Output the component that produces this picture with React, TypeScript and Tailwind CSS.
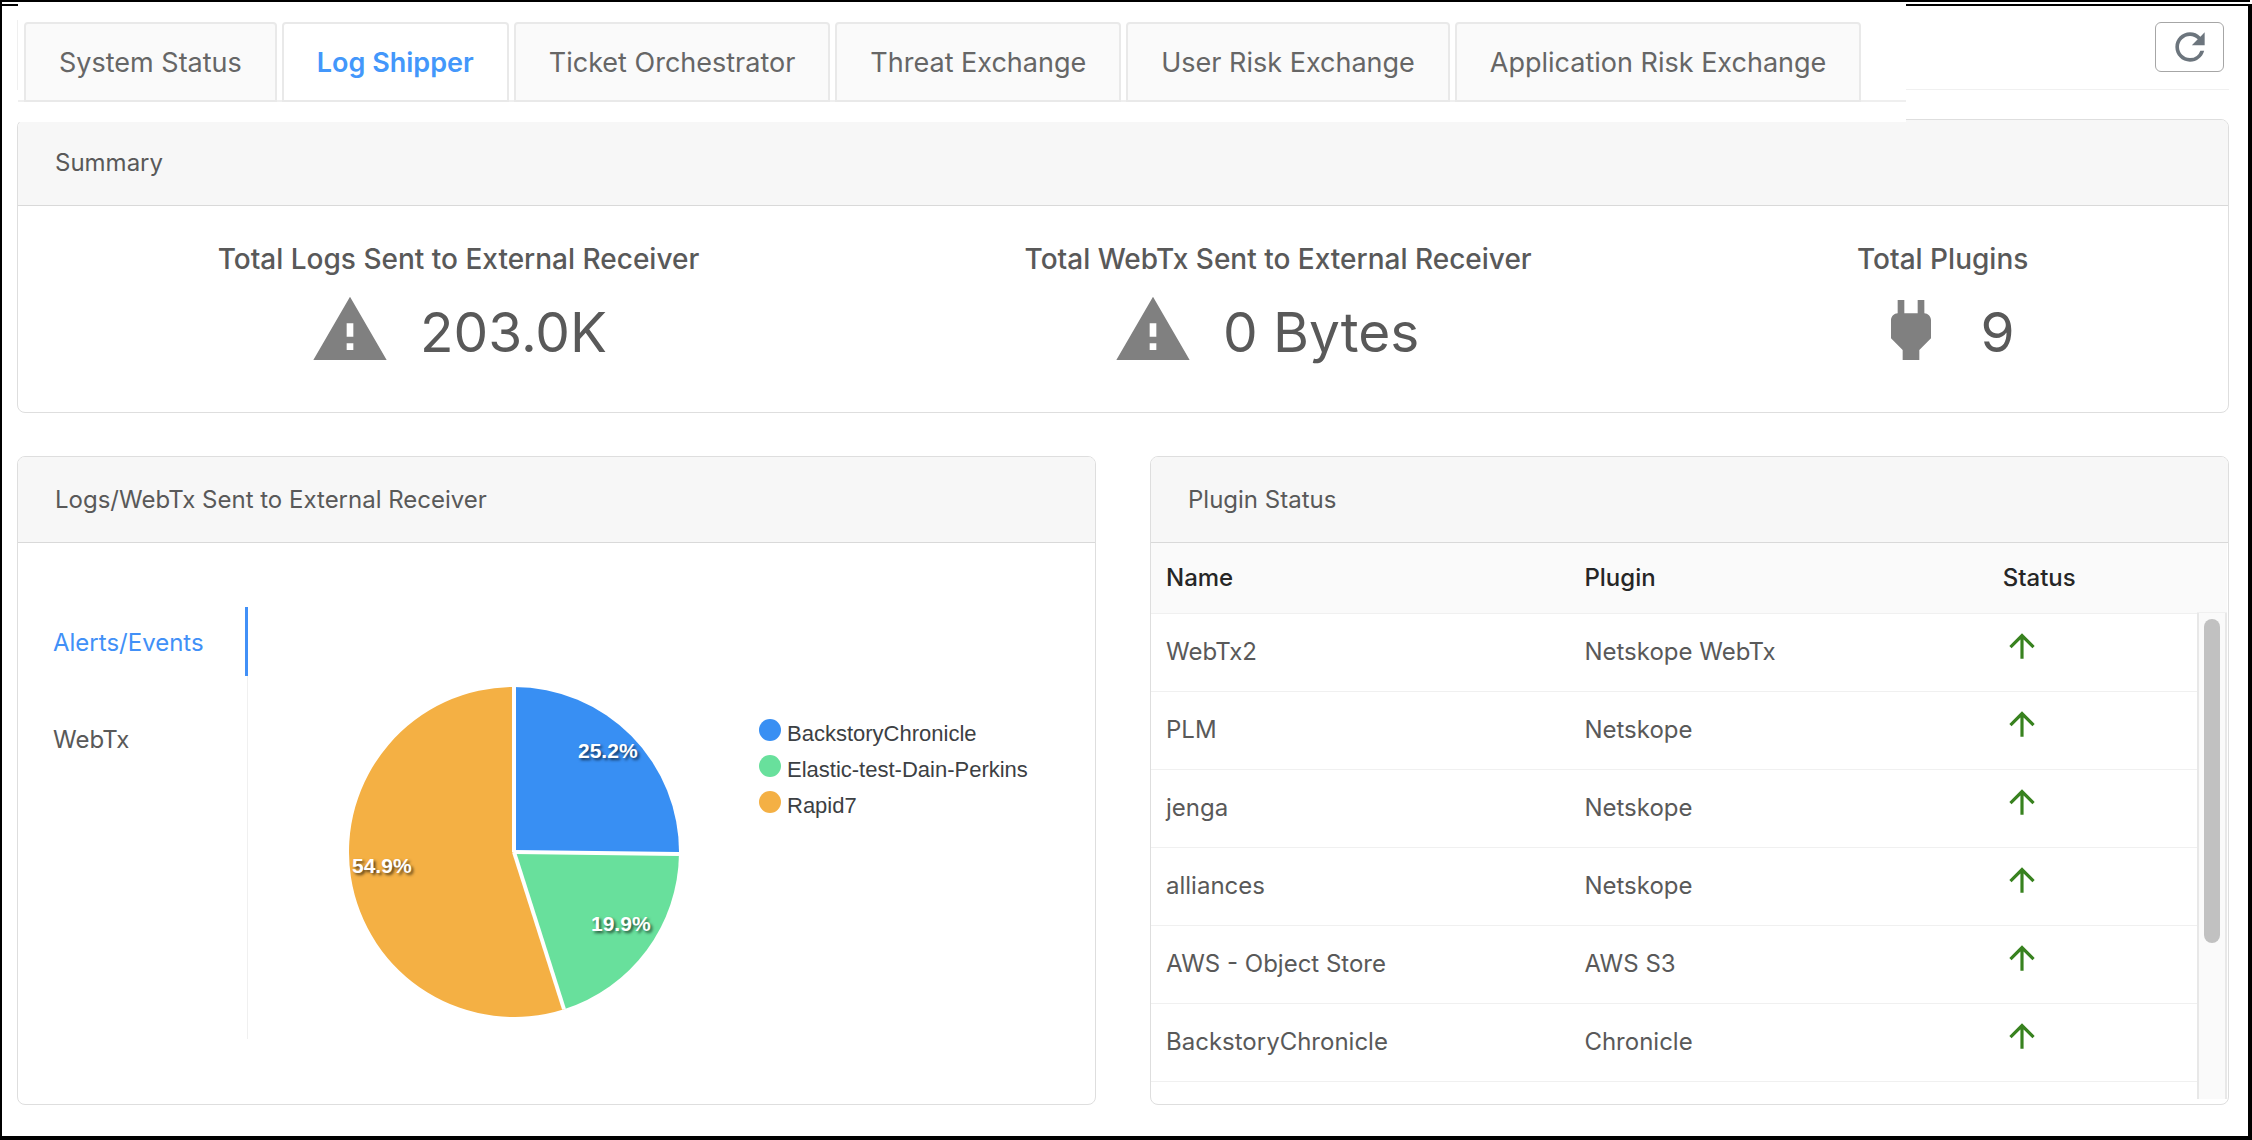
import { useState, type ReactNode } from "react";

const tabs = [
  "System Status",
  "Log Shipper",
  "Ticket Orchestrator",
  "Threat Exchange",
  "User Risk Exchange",
  "Application Risk Exchange",
];

const plugins = [
  { name: "WebTx2", plugin: "Netskope WebTx" },
  { name: "PLM", plugin: "Netskope" },
  { name: "jenga", plugin: "Netskope" },
  { name: "alliances", plugin: "Netskope" },
  { name: "AWS - Object Store", plugin: "AWS S3" },
  { name: "BackstoryChronicle", plugin: "Chronicle" },
];

const slices = [
  { name: "BackstoryChronicle", value: 25.2, fill: "#388ff3", x: 229, y: 71 },
  { name: "Elastic-test-Dain-Perkins", value: 19.9, fill: "#68e09c", x: 242, y: 244 },
  { name: "Rapid7", value: 54.9, fill: "#f4b044", x: 3, y: 186 },
];

const WARNING = "M1 21h22L12 2 1 21zm12-3h-2v-2h2v2zm0-4h-2v-4h2v4z";
const POWER =
  "M16.01 7L16 3h-2v4h-4V3H8v4h-.01C7 6.99 6 7.99 6 8.99v5.49L9.5 18v3h5v-3l3.5-3.51v-5.5c0-1-1-2-1.99-1.99z";
const REFRESH =
  "M17.65 6.35A7.958 7.958 0 0 0 12 4c-4.42 0-7.99 3.58-7.99 8s3.57 8 7.99 8c3.73 0 6.84-2.55 7.73-6h-2.08A5.99 5.99 0 0 1 12 18c-3.31 0-6-2.69-6-6s2.69-6 6-6c1.66 0 3.14.69 4.22 1.78L13 11h7V4l-2.35 2.35z";
const ARROW_UP = "M4 12l1.41 1.41L11 7.83V20h2V7.83l5.58 5.59L20 12l-8-8-8 8z";

function Icon({ path, className }: { path: string; className: string }) {
  return (
    <svg viewBox="0 0 24 24" fill="currentColor" aria-hidden="true" className={className}>
      <path d={path} />
    </svg>
  );
}

function Card({ title, children }: { title: string; children: ReactNode }) {
  return (
    <section className="overflow-hidden rounded-lg border border-[#dedede] bg-white">
      <h2 className="flex h-[86px] items-center border-b border-[#d9d9d9] bg-[#f7f7f7] px-[37px] text-2xl text-[#595959]">
        {title}
      </h2>
      {children}
    </section>
  );
}

function Stat({
  title,
  icon,
  value,
  className = "",
}: {
  title: string;
  icon: string;
  value: string;
  className?: string;
}) {
  return (
    <div className="flex flex-col items-center">
      <h3 className="mb-[11px] text-[28px] leading-10 font-medium">{title}</h3>
      <div className={"flex items-start gap-[30px] " + className}>
        <Icon path={icon} className="size-20 text-[#808080]" />
        <span className="text-[55px] leading-[84px]">{value}</span>
      </div>
    </div>
  );
}

function Pie() {
  const c = 165;
  let start = 0;
  const point = (pct: number) => {
    const a = (pct / 100) * 2 * Math.PI;
    return `${c + c * Math.sin(a)} ${c - c * Math.cos(a)}`;
  };
  const wedges = slices.map((s) => {
    const from = start;
    start += s.value;
    return `M${c} ${c}L${point(from)}A${c} ${c} 0 ${s.value > 50 ? 1 : 0} 1 ${point(start)}Z`;
  });
  const cuts = [0, slices[0].value, slices[0].value + slices[1].value];
  return (
    <svg
      viewBox="0 0 330 330"
      className="mt-20 ml-[101px] size-[330px] shrink-0"
      role="img"
      aria-label="Share of logs by receiver"
    >
      {wedges.map((d, i) => (
        <path key={i} d={d} fill={slices[i].fill} />
      ))}
      {cuts.map((p) => (
        <path key={p} d={`M${c} ${c}L${point(p)}`} stroke="#fff" strokeWidth="4" />
      ))}
      {slices.map((s) => (
        <text
          key={s.name}
          x={s.x}
          y={s.y}
          className="fill-white font-['Liberation_Sans',sans-serif] text-[21px] font-bold [text-shadow:2px_2px_3px_rgba(0,0,0,0.65)]"
        >
          {s.value}%
        </text>
      ))}
    </svg>
  );
}

export default function App() {
  const [tab, setTab] = useState("Log Shipper");
  const [source, setSource] = useState("Alerts/Events");

  return (
    <div className="flex min-h-screen flex-col bg-white font-['Inter',sans-serif] text-[#595959]">
      <div className="mr-0.5 h-0.5 bg-black" />
      <div className="h-0.5 border-l-2 border-black" />
      <main className="flex-1 border-r-4 border-b-4 border-l-2 border-black">
        <div className="flex h-0.5 justify-between">
          <div className="w-4 bg-black" />
          <div className="w-[342px] bg-black" />
        </div>

        <div className="pr-[19px] pb-[31px] pl-[15px]">
          <header className="flex h-[113px] items-start">
            <div className="mt-[14px] h-[70px] w-px bg-[#efefef]" />
            <nav className="relative z-10 h-[116px] flex-1 bg-white pt-4">
              <div role="tablist" className="flex h-20 gap-[5px] border-b-2 border-[#efefef] pl-1.5">
                {tabs.map((t) => (
                  <button
                    key={t}
                    type="button"
                    role="tab"
                    aria-selected={t === tab}
                    onClick={() => setTab(t)}
                    className={
                      "h-20 shrink-0 rounded-t border-2 border-[#e9e9e9] px-[33px] pt-0.5 text-[27px] whitespace-nowrap " +
                      (t === tab ? "bg-white font-semibold text-[#4397fb]" : "bg-[#fafafa] text-[#666666]")
                    }
                  >
                    {t}
                  </button>
                ))}
              </div>
            </nav>
            <div className="flex h-[84px] w-[323px] items-start justify-end border-b border-[#f0f0f0] pt-4 pr-[5px]">
              <button
                type="button"
                aria-label="Refresh"
                className="flex h-[50px] w-[69px] items-center justify-center rounded-md border border-[#a6a6a6] text-[#6c757d]"
              >
                <Icon path={REFRESH} className="size-11" />
              </button>
            </div>
          </header>

          <Card title="Summary">
            <div className="flex justify-around px-[37px] pt-[33px] pb-[38px]">
              <Stat title="Total Logs Sent to External Receiver" icon={WARNING} value="203.0K" />
              <Stat title="Total WebTx Sent to External Receiver" icon={WARNING} value="0 Bytes" className="pr-6" />
              <Stat title="Total Plugins" icon={POWER} value="9" />
            </div>
          </Card>

          <div className="mt-[43px] grid grid-cols-2 gap-[54px]">
            <Card title="Logs/WebTx Sent to External Receiver">
              <div className="flex px-[35px] pt-16 pb-[65px]">
                <div
                  role="tablist"
                  aria-orientation="vertical"
                  className="flex h-[432px] w-[195px] shrink-0 flex-col gap-7 border-r border-[#f0f0f0]"
                >
                  {["Alerts/Events", "WebTx"].map((s) => (
                    <button
                      key={s}
                      type="button"
                      role="tab"
                      aria-selected={s === source}
                      onClick={() => setSource(s)}
                      className={
                        "-mr-px h-[69px] border-r-3 pt-0.5 text-left text-2xl " +
                        (s === source ? "border-[#4190f7] text-[#4190f7]" : "border-transparent")
                      }
                    >
                      {s}
                    </button>
                  ))}
                </div>
                <Pie />
                <ul className="mt-28 ml-20 font-['Liberation_Sans',sans-serif] text-[22px] leading-[29px] text-[#3c4043]">
                  {slices.map((s) => (
                    <li key={s.name} className="flex h-9 items-start gap-1.5 whitespace-nowrap">
                      <span className="size-[22px] shrink-0 rounded-full" style={{ backgroundColor: s.fill }} />
                      {s.name}
                    </li>
                  ))}
                </ul>
              </div>
            </Card>

            <Card title="Plugin Status">
              <div className="flex h-[556px]">
                <table className="h-fit flex-1 table-fixed text-left text-2xl">
                  <thead>
                    <tr className="h-[70px] border-b border-[#f0f0f0] bg-[#fafafa] text-[#262626]">
                      <th scope="col" className="w-2/5 pl-[15px] font-medium">Name</th>
                      <th scope="col" className="w-2/5 pl-[15px] font-medium">Plugin</th>
                      <th scope="col" className="w-1/5 pl-[15px] font-medium">Status</th>
                    </tr>
                  </thead>
                  <tbody>
                    {plugins.map((p) => (
                      <tr key={p.name} className="h-[78px] border-b border-[#f0f0f0]">
                        <td className="pl-[15px]">{p.name}</td>
                        <td className="pl-[15px]">{p.plugin}</td>
                        <td className="pb-3 pl-[15px]">
                          <Icon path={ARROW_UP} className="size-[38px] text-[#38821f]" />
                        </td>
                      </tr>
                    ))}
                  </tbody>
                </table>
                <div className="mr-px flex w-[30px] shrink-0 flex-col">
                  <div className="h-[70px] border-b border-[#f0f0f0] bg-[#fafafa]" />
                  <div className="flex flex-1 justify-center border-x-2 border-[#e8e8e8] bg-[#fafafa] pt-1.5">
                    <div className="h-[324px] w-4 rounded-full bg-[#c1c1c1]" />
                  </div>
                </div>
              </div>
            </Card>
          </div>
        </div>
      </main>
    </div>
  );
}
